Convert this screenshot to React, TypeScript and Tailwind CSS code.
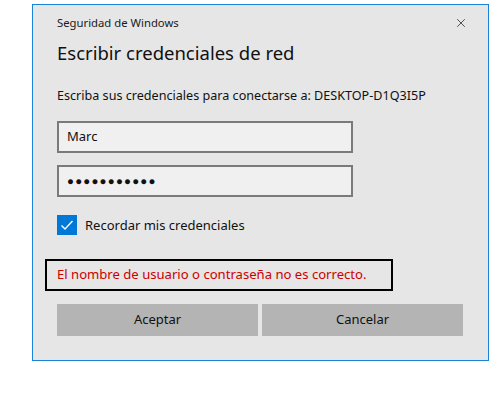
import { X } from "lucide-react";

const font = { fontFamily: '"Noto Sans", "Open Sans", sans-serif' };

export default function App() {
  return (
    <div className="w-[494px] h-[398px] bg-white pt-[4px] pl-[32px]" style={font}>
      <div className="w-[457px] h-[357px] border border-[#1883d7] bg-[#e6e6e6] px-[24px] text-[#000]">
        <div className="mt-[10px] flex items-center justify-between h-[16px]">
          <span className="text-[11.3px] leading-[16px] text-[#1a1a1a]">Seguridad de Windows</span>
          <X size={14} strokeWidth={1.3} className="-mr-[4px] text-[#222]" />
        </div>
        <h1 className="mt-[8px] h-[28px] text-[18.5px] leading-[28px] text-[#111]">Escribir credenciales de red</h1>
        <p className="mt-[20px] h-[18px] text-[12.6px] leading-[18px] text-[#111]">
          Escriba sus credenciales para conectarse a: DESKTOP-D1Q3I5P
        </p>
        <div className="mt-[16px] w-[296px] h-[32px] border-2 border-[#7a7a7a] bg-[#f0f0f0] flex items-center pl-[8px] text-[13px] text-[#111]">
          Marc
        </div>
        <div className="mt-[12px] w-[296px] h-[32px] border-2 border-[#7a7a7a] bg-[#f0f0f0] flex items-center pl-[8px] text-[11.5px] tracking-[1.2px] text-[#111]">
          ●●●●●●●●●●●
        </div>
        <div className="mt-[18px] flex items-center h-[20px] gap-[8px]">
          <div className="w-[20px] h-[20px] bg-[#0078d7] flex items-center justify-center">
            <svg width="16" height="16" viewBox="0 0 16 16">
              <path d="M2.5 8.5 L6 12 L13.5 4" fill="none" stroke="#fff" strokeWidth="1.4" />
            </svg>
          </div>
          <span className="text-[13px] leading-[18px] text-[#111]">Recordar mis credenciales</span>
        </div>
        <div className="mt-[24px] -ml-[12px] w-[348px] h-[32px] border-2 border-black flex items-center pl-[10px] text-[13.1px] text-[#cc0000]">
          El nombre de usuario o contraseña no es correcto.
        </div>
        <div className="mt-[13px] flex gap-[4px]">
          <button className="w-[201px] h-[32px] bg-[#b4b4b4] text-[13px] text-[#111]">Aceptar</button>
          <button className="w-[201px] h-[32px] bg-[#b4b4b4] text-[13px] text-[#111]">Cancelar</button>
        </div>
      </div>
    </div>
  );
}
